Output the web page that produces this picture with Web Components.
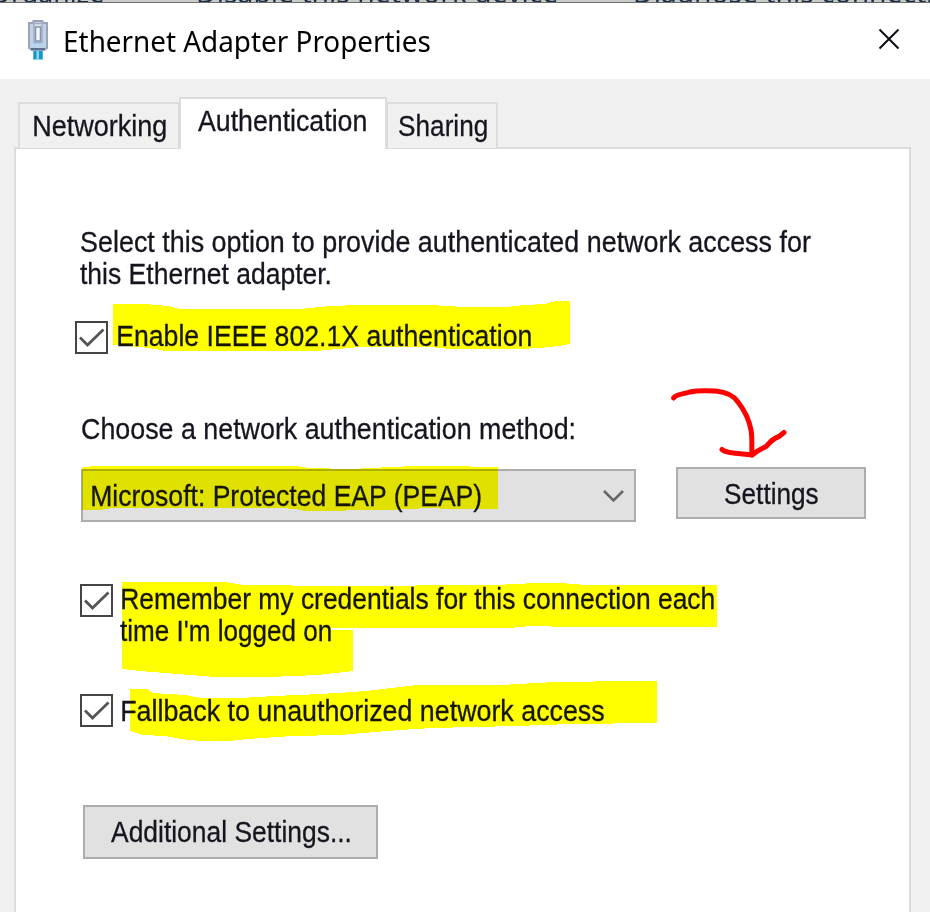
<!DOCTYPE html>
<html lang="en">
<head>
<meta charset="utf-8">
<title>Ethernet Adapter Properties</title>
<style>
  html, body {
    margin: 0;
    height: 100%;
    overflow: hidden;
  }

  body {
    background: #fff;
    color: #15151f;
    font-family: "Liberation Sans", Arial, sans-serif;
  }
</style>
</head>
<body>
<properties-dialog></properties-dialog>

<script>
const define = (name, html, setup) => {
  const template = document.createElement("template");
  template.innerHTML = html;

  customElements.define(name, class extends HTMLElement {
    constructor() {
      super();
      this.attachShadow({ mode: "open" });
    }

    connectedCallback() {
      if (this.shadowRoot.childNodes.length) return;
      this.shadowRoot.appendChild(template.content.cloneNode(true));
      if (setup) setup(this, this.shadowRoot);
    }
  });
};

// one line of text, stretched so its ink fills the given width
define("fit-text", /*html*/`
  <style>
    :host {
      display: block;
      flex: none;
      font-size: 29.5px;
      line-height: 32px;
      height: 32px;
      white-space: nowrap;
      -webkit-text-stroke: var(--stroke, 0.3px);
    }

    span {
      display: inline-block;
      transform-origin: 0 0;
    }
  </style>
  <span><slot></slot></span>`, (host, root) => {
  const width = Number(host.getAttribute("width"));
  const style = getComputedStyle(host);
  const nodes = root.querySelector("slot").assignedNodes({ flatten: true });
  const text = nodes.map((node) => node.textContent).join("").trim();
  const ctx = document.createElement("canvas").getContext("2d");
  ctx.font = `${style.fontWeight} ${style.fontSize} ${style.fontFamily}`;
  const ink = ctx.measureText(text);
  const scale = width / (ink.actualBoundingBoxRight + ink.actualBoundingBoxLeft);
  host.style.width = width + "px";
  root.querySelector("span").style.transform =
    `translateX(${ink.actualBoundingBoxLeft * scale}px) scaleX(${scale})`;
});

define("back-toolbar", /*html*/`
  <style>
    :host {
      display: flex;
      box-sizing: border-box;
      height: 3px;
      overflow: hidden;
      background: #c8cbc7;
      border-bottom: 1px solid #6e706d;
      color: #1c2f47;
      --stroke: 0;
    }

    fit-text {
      font-family: "Noto Sans", "Open Sans", sans-serif;
      font-size: 29px;
      line-height: 40px;
      margin-top: -28px;
    }
  </style>
  <fit-text width="112" style="margin-left: -9px">Organize</fit-text>
  <fit-text width="359" style="margin-left: 95px">Disable this network device</fit-text>
  <fit-text width="331" style="margin-left: 78px">Diagnose this connection</fit-text>`);

define("title-bar", /*html*/`
  <style>
    :host {
      display: flex;
      box-sizing: border-box;
      height: 76px;
      padding: 17px 30px 0 27px;
      background: #fff;
      color: #000;
      --stroke: 0;
    }

    fit-text {
      font-family: "Noto Sans", "Open Sans", sans-serif;
      font-size: 29px;
      line-height: 42px;
      margin: 0 auto 0 16px;
    }

    .close {
      margin-top: 8px;
    }
  </style>
  <svg width="22" height="40" viewBox="0 0 22 40">
    <path d="M6 29h10v11h-10z" fill="#8ed4ee"/>
    <path d="M6.5 29h3v10h-3zM12 29h3.500v10h-3.500z" fill="#1796c4"/>
    <path d="M6.500 1h9v2H20v25l-3 2H5l-3-2V3h4.500z" fill="#c4d0e4" stroke="#97a4ba" stroke-width="2"/>
    <path d="M5 21h12v6H5z" fill="#b6d5ee"/>
    <path d="M7 3.500h8v19H7z" fill="#dbe3f0" stroke="#a2aec3" stroke-width="1.500"/>
    <path d="M8.500 7h5v14h-5z" fill="#f3f6fb" stroke="#8794ad" stroke-width="1.500"/>
    <path d="M4 29h14" stroke="#58708f" stroke-width="2"/>
  </svg>
  <fit-text width="365"><slot></slot></fit-text>
  <svg class="close" width="22" height="22" viewBox="0 0 22 22">
    <path d="M1.500 1.500L20.500 20.500M20.500 1.500L1.500 20.500" stroke="#0b0b12" stroke-width="2"/>
  </svg>`);

define("tab-item", /*html*/`
  <style>
    :host {
      display: block;
      box-sizing: border-box;
      height: 46px;
      padding: 6px 9px 0 11px;
      border: 2px solid #dcdcdc;
      border-bottom: none;
      background: #f0f0f0;
    }

    :host(:first-child) {
      padding: 6px 12px 0 14px;
    }

    :host([active]) {
      position: relative;
      height: 52px;
      margin: 0 -1px;
      padding: 6px 19px 0 17px;
      background: #fff;
    }
  </style>
  <slot></slot>`);

define("tab-strip", /*html*/`
  <style>
    :host {
      display: flex;
      align-items: flex-end;
      box-sizing: border-box;
      height: 69px;
      padding-left: 18px;
    }

    /* the active tab covers the pane's top border */
    ::slotted([active]) {
      margin-bottom: -1px !important;
    }
  </style>
  <slot></slot>`);

define("tab-pane", /*html*/`
  <style>
    :host {
      display: block;
      box-sizing: border-box;
      width: 897px;
      height: 780px;
      margin: -1px 0 0 14px;
      padding: 77px 43px 0 64px;
      border: 2px solid #dcdcdc;
      background: #fff;
    }
  </style>
  <slot></slot>`);

define("check-option", /*html*/`
  <style>
    :host {
      display: flex;
    }

    .box {
      flex: none;
      width: 33px;
      height: 33px;
      margin: var(--box-top, 1px) var(--gap, 9px) 0 0;
    }
  </style>
  <svg class="box" viewBox="0 0 33 33">
    <rect x="1" y="1" width="31" height="31" fill="#fff" stroke="#444" stroke-width="2"/>
    <path d="M5 16.500L12.500 24L28.500 8.500" fill="none" stroke="#555" stroke-width="2.800"/>
  </svg>
  <div><slot></slot></div>`);

define("select-box", /*html*/`
  <style>
    :host {
      display: flex;
      box-sizing: border-box;
      width: 555px;
      height: 53px;
      padding: 9px 9px 0 9px;
      border: 2px solid #adadad;
      background: #e1e1e1;
      justify-content: space-between;
    }
  </style>
  <slot></slot>
  <svg width="24" height="18" viewBox="0 0 24 18" style="margin-top: 8px">
    <path d="M3 3L12.500 12.500L22 3" fill="none" stroke="#666" stroke-width="2.600"/>
  </svg>`);

define("push-button", /*html*/`
  <style>
    :host {
      display: flex;
      box-sizing: border-box;
      justify-content: center;
      padding-top: 9px;
      border: 2px solid #adadad;
      background: #e1e1e1;
    }
  </style>
  <slot></slot>`);

// marker strokes and the hand drawn arrow, lying over the whole window
define("ink-layer", /*html*/`
  <style>
    :host {
      position: absolute;
      top: 0;
      left: 0;
      width: 930px;
      height: 912px;
      mix-blend-mode: multiply;
      pointer-events: none;
    }

    svg {
      display: block;
    }
  </style>
  <svg width="930" height="912" viewBox="0 0 930 912">
    <g fill="#ff0" shape-rendering="crispEdges">
      <path d="M113 304H145L168 306L180 309H300L330 306L360 305H430L464 307H506L525 305L545 304L556 301H570V344L559 346L540 348L520 349H450L430 347H360L315 351H165L155 349L140 347L113 345Z"/>
      <path d="M82 467L97 466H295L310 468L350 469L371 468L391 467L415 466H464L476 467H498V509H449L430 508L386 510L306 511L295 509L280 508H112L100 510H82Z"/>
      <path d="M122 582H225L244 585L338 586L494 585L516 584L536 583H560L586 585H717V627H571L531 626L509 628H331V630H353V671L318 675L268 677H215L178 674L140 671L122 669Z"/>
      <path d="M130 689H147L153 693L185 695L201 698H240L275 696L320 694L353 692L375 690L400 687L417 685H502L536 683L555 682L632 681H657V723L570 724L517 726L432 728L400 730L375 732L340 735L293 736L247 739L229 741H200L180 739L165 736L142 735L133 732L130 731Z"/>
    </g>
    <g fill="none" stroke="#f00" stroke-width="5" stroke-linecap="round" stroke-linejoin="round">
      <path d="M673.500 398C678 393 685 394 690 392C698 390 707 390.500 716 391C726 392 734 396 738 402C745 411 749 419 751 430C752.500 438 751.500 446 752 455"/>
      <path d="M722 449.500C726 453.500 740 453.500 752 455C758 450 763 448 766 446.500C770 443 771 439 779 436.500L784 432.500"/>
    </g>
  </svg>`);

define("properties-dialog", /*html*/`
  <style>
    :host {
      display: block;
      width: 930px;
      height: 912px;
      overflow: hidden;
      background: #f0f0f0;
    }

    .intro {
      margin-left: 1px;
    }

    .enable {
      --gap: 10px;
      margin: 30px 0 59px -5px;
    }

    .method {
      display: flex;
      align-items: flex-start;
      justify-content: space-between;
      margin: 22px 0 61px;
    }

    .method select-box {
      margin: 2px 0 0 1px;
    }

    .settings {
      width: 190px;
      height: 52px;
    }

    .remember {
      margin-bottom: 48px;
    }

    .additional {
      width: 295px;
      height: 54px;
      margin: 78px 0 0 3px;
    }
  </style>
  <back-toolbar></back-toolbar>
  <title-bar>Ethernet Adapter Properties</title-bar>
  <tab-strip>
    <tab-item><fit-text width="132">Networking</fit-text></tab-item>
    <tab-item active><fit-text width="168">Authentication</fit-text></tab-item>
    <tab-item><fit-text width="88">Sharing</fit-text></tab-item>
  </tab-strip>
  <tab-pane>
    <div class="intro">
      <fit-text width="730">Select this option to provide authenticated network access for</fit-text>
      <fit-text width="250" style="margin-left: -1px">this Ethernet adapter.</fit-text>
    </div>
    <check-option class="enable"><fit-text width="413">Enable IEEE 802.1X authentication</fit-text></check-option>
    <fit-text width="492" style="margin-left: 2px">Choose a network authentication method:</fit-text>
    <div class="method">
      <select-box><fit-text width="389">Microsoft: Protected EAP (PEAP)</fit-text></select-box>
      <push-button class="settings"><fit-text width="93">Settings</fit-text></push-button>
    </div>
    <check-option class="remember">
      <fit-text width="592">Remember my credentials for this connection each</fit-text>
      <fit-text width="211" style="margin-left: -2px">time I'm logged on</fit-text>
    </check-option>
    <check-option style="--box-top: -1px"><fit-text width="482">Fallback to unauthorized network access</fit-text></check-option>
    <push-button class="additional"><fit-text width="239">Additional Settings...</fit-text></push-button>
  </tab-pane>
  <ink-layer></ink-layer>`);
</script>
</body>
</html>
